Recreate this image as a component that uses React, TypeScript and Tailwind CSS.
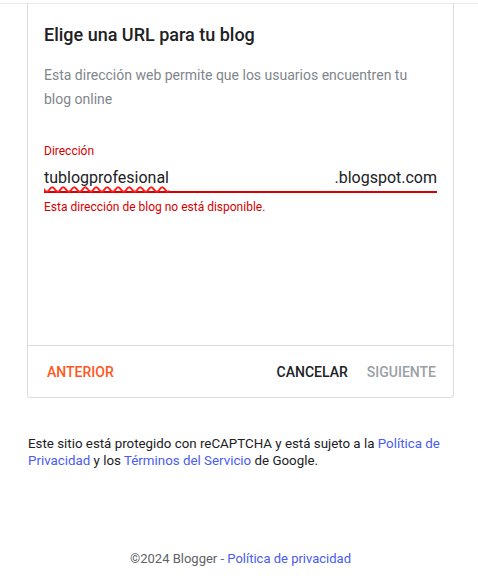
import React from "react";

const App = () => {
    return (
        <div className="min-h-[581px] bg-white font-['Roboto',sans-serif]">
            <div className="h-[4px] border-b border-[#e8eaed]" />
            <div className="ml-[27px] w-[427px] border-x border-b border-[#dadce0] rounded-b-[4px]">
                <div className="h-[341px] px-4 pt-[19px]">
                    <h1 className="text-[18px] leading-[24px] font-medium text-[#202124]">
                        Elige una URL para tu blog
                    </h1>
                    <p className="mt-4 text-[14px] leading-[24px] text-[#80868b]">
                        Esta dirección web permite que los usuarios encuentren tu blog online
                    </p>
                    <p className="mt-[32px] text-[12px] leading-[16px] text-[#d50000]">Dirección</p>
                    <div className="mt-[7px] flex justify-between border-b-2 border-[#d50000] pb-[1px] text-[16px] leading-[24px] text-[#202124]">
                        <span className="underline decoration-wavy decoration-[color:#ff1a1a] decoration-[length:1.5px] underline-offset-[3px]">
                            tublogprofesional
                        </span>
                        <span>.blogspot.com</span>
                    </div>
                    <p className="mt-[6px] text-[12px] leading-[16px] text-[#d50000]">
                        Esta dirección de blog no está disponible.
                    </p>
                </div>
                <div className="flex h-[52px] items-center justify-between border-t border-[#dadce0] pl-[19px] pr-[17px] pt-[1px] text-[14px] font-medium">
                    <span className="text-[#ff5722]">ANTERIOR</span>
                    <div className="flex gap-[19px]">
                        <span className="text-[#202124]">CANCELAR</span>
                        <span className="text-[#9aa0a6]">SIGUIENTE</span>
                    </div>
                </div>
            </div>
            <p className="ml-[28px] mt-[37px] w-[426px] text-[13.33px] leading-[17px] text-[#202124]">
                Este sitio está protegido con reCAPTCHA y está sujeto a la{" "}
                <span className="text-[#4a5cf0]">Política de Privacidad</span> y los{" "}
                <span className="text-[#4a5cf0]">Términos del Servicio</span> de Google.
            </p>
            <p className="ml-[27px] mt-[81px] w-[427px] text-center text-[13px] leading-[17px] text-[#5f6368]">
                ©2024 Blogger - <span className="text-[#4a5cf0]">Política de privacidad</span>
            </p>
        </div>
    );
};

export default App;
